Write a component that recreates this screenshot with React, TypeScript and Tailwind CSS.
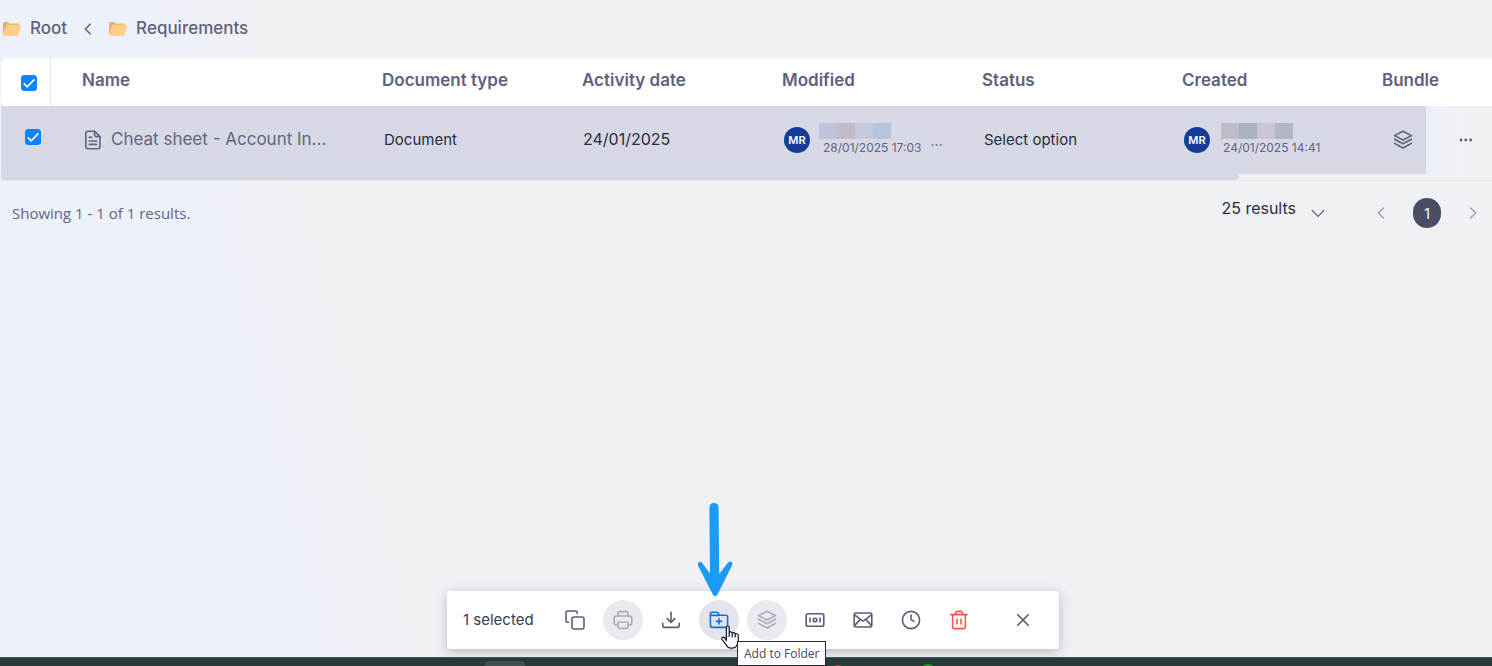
import React from 'react';

type IconProps = { className?: string; children: React.ReactNode };

function Icon({ className = '', children }: IconProps) {
  return (
    <svg
      className={`h-5 w-5 shrink-0 ${className}`}
      viewBox="0 0 20 20"
      fill="none"
      stroke="currentColor"
      strokeWidth="1.6"
      strokeLinecap="round"
      strokeLinejoin="round"
      aria-hidden="true"
    >
      {children}
    </svg>
  );
}

const layersShape = (
  <>
    <path d="M10 1.2 L18.4 5.6 L10 10 L1.6 5.6 Z" />
    <path d="M1.6 9.2 L10 13.8 L18.4 9.2" />
    <path d="M1.6 13.4 L10 18 L18.4 13.4" />
  </>
);

const actions = [
  {
    label: 'Copy',
    tone: 'text-[#5a5c78]',
    icon: (
      <>
        <path d="M3.6 12.2 H2.8 A1.8 1.8 0 0 1 1 10.4 V2.8 A1.8 1.8 0 0 1 2.8 1 H10.4 A1.8 1.8 0 0 1 12.2 2.8 V3.4" />
        <rect x="7" y="7" width="12" height="12" rx="2" />
      </>
    ),
  },
  {
    label: 'Print',
    tone: 'bg-[#e9eaef] text-[#a9abb9]',
    disabled: true,
    icon: (
      <>
        <path d="M5 6 V3.2 A1.6 1.6 0 0 1 6.6 1.6 H13.4 A1.6 1.6 0 0 1 15 3.2 V6" />
        <path d="M5 15 H3.2 A2 2 0 0 1 1.2 13 V8.4 A2.4 2.4 0 0 1 3.6 6 H16.4 A2.4 2.4 0 0 1 18.8 8.4 V13 A2 2 0 0 1 16.8 15 H15" />
        <path d="M5 12.2 H15 V16.6 A1.8 1.8 0 0 1 13.2 18.4 H6.8 A1.8 1.8 0 0 1 5 16.6 Z" />
      </>
    ),
  },
  {
    label: 'Download',
    tone: 'text-[#5a5c78]',
    icon: (
      <>
        <path d="M10 2.4 V12" />
        <path d="M6.2 8.6 L10 12.4 L13.8 8.6" />
        <path d="M1.8 13.2 V15.4 A2 2 0 0 0 3.8 17.4 H16.2 A2 2 0 0 0 18.2 15.4 V13.2" />
      </>
    ),
  },
  {
    label: 'Add to Folder',
    tone: 'bg-[#e3e4ed] text-[#1272d3]',
    icon: (
      <>
        <path d="M1.4 15.6 V4 A1.8 1.8 0 0 1 3.2 2.2 H7.6 A1.4 1.4 0 0 1 8.8 2.8 L10.4 5.2 H16.8 A1.8 1.8 0 0 1 18.6 7 V15.6 A1.8 1.8 0 0 1 16.8 17.4 H3.2 A1.8 1.8 0 0 1 1.4 15.6 Z" />
        <path d="M1.4 5.4 H10.2" />
        <path d="M10 8.8 V14 M7.4 11.4 H12.6" />
      </>
    ),
  },
  { label: 'Add to bundle', tone: 'bg-[#e9eaef] text-[#a9abb9]', disabled: true, icon: layersShape },
  {
    label: 'Number',
    tone: 'text-[#5a5c78]',
    icon: (
      <>
        <rect x="1.2" y="3.8" width="17.6" height="12.4" rx="1.8" />
        <circle cx="10" cy="10" r="1.8" />
        <path d="M5 8 V12 M15 8 V12" />
      </>
    ),
  },
  {
    label: 'Email',
    tone: 'text-[#5a5c78]',
    icon: (
      <>
        <rect x="1.2" y="3" width="17.6" height="14" rx="1.6" />
        <path d="M1.6 4.8 L8.8 10.4 A2 2 0 0 0 11.2 10.4 L18.4 4.8" />
        <path d="M1.8 15.4 L7 9.6 M18.2 15.4 L13 9.6" />
      </>
    ),
  },
  {
    label: 'History',
    tone: 'text-[#5a5c78]',
    icon: (
      <>
        <circle cx="10" cy="10" r="8.6" />
        <path d="M10 5 V9.6 L13 11.4" />
      </>
    ),
  },
  {
    label: 'Delete',
    tone: 'text-[#f9544b]',
    icon: (
      <>
        <path d="M1.8 4.6 H18.2" />
        <path d="M6.2 4.4 L6.8 2.4 A1.4 1.4 0 0 1 8.1 1.4 H11.9 A1.4 1.4 0 0 1 13.2 2.4 L13.8 4.4" />
        <path d="M3.6 4.8 V16.6 A2 2 0 0 0 5.6 18.6 H14.4 A2 2 0 0 0 16.4 16.6 V4.8" />
        <path d="M8 9.4 V14 M12 9.4 V14" />
      </>
    ),
  },
];

function FolderIcon() {
  return (
    <svg className="h-[14px] w-[18px]" viewBox="0 0 18 14" aria-hidden="true">
      <path d="M0 1 Q0 0 1 0 H5 L6.5 1.6 H14.6 Q15.6 1.6 15.6 2.6 V12 H0 Z" fill="#e6b366" />
      <path d="M3.4 3.6 Q3.7 2.8 4.6 2.8 H17 Q18.2 2.8 17.8 4 L15.8 13 Q15.6 14 14.6 14 H1 Q0 14 0 13 V12.4 Z" fill="#ffd086" />
    </svg>
  );
}

function Checkbox({ label }: { label: string }) {
  return (
    <span className="grid h-4 w-4">
      <input
        type="checkbox"
        defaultChecked
        aria-label={label}
        className="col-start-1 row-start-1 h-4 w-4 appearance-none rounded-[3px] border border-gray-400 checked:border-[#0d83fd] checked:bg-[#0d83fd]"
      />
      <svg className="pointer-events-none col-start-1 row-start-1 h-4 w-4" viewBox="0 0 16 16" fill="none" stroke="white" strokeWidth="1.6" aria-hidden="true">
        <path d="M2.8 8.4 L6.2 11.8 L13.4 4.4" />
      </svg>
    </span>
  );
}

function Avatar() {
  return (
    <span className="flex h-[26px] w-[26px] shrink-0 items-center justify-center rounded-full bg-[#143c9b] text-[11px] font-semibold text-white">
      MR
    </span>
  );
}

function RedactedName({ colors }: { colors: string[] }) {
  return (
    <span className="flex h-4">
      {colors.map((c, i) => (
        <span key={i} className={`w-[18px] ${c}`} />
      ))}
    </span>
  );
}

const headings = ['Name', 'Document type', 'Activity date', 'Modified', 'Status', 'Created', 'Bundle'];

function DocumentTable() {
  return (
    <div className="ml-px border-b border-[#e8e6e6]">
      <table className="w-full table-fixed border-separate border-spacing-0 text-left">
        <colgroup>
          <col className="w-[50px]" />
          <col className="w-[300px]" />
          <col className="w-[200px]" />
          <col className="w-[200px]" />
          <col className="w-[200px]" />
          <col className="w-[200px]" />
          <col className="w-[200px]" />
          <col />
          <col className="w-[66px]" />
        </colgroup>
        <thead>
          <tr className="h-12">
            <th className="rounded-l-md border-r border-[#e8e8ec] bg-white pl-5 pt-[2px]">
              <Checkbox label="Select all documents" />
            </th>
            {headings.map((h) => (
              <th key={h} className="overflow-visible whitespace-nowrap bg-white pb-[2px] pl-[31px] text-[17px] font-semibold text-[#5f617d]">
                {h}
              </th>
            ))}
            <th className="bg-white" aria-label="Row actions" />
          </tr>
        </thead>
        <tbody>
          <tr className="h-[68px] text-[#2b2c3d]">
            <td className="bg-[#d6d8e5] pb-[6px] pl-6">
              <Checkbox label="Select Cheat sheet" />
            </td>
            <td className="bg-[#d6d8e5] pl-8 text-[#63657f]">
              <a href="#document" className="flex items-center gap-2">
                <Icon>
                  <path d="M2.8 3.4 A2.2 2.2 0 0 1 5 1.2 H11.6 L17 6.6 V16.6 A2.2 2.2 0 0 1 14.8 18.8 H5 A2.2 2.2 0 0 1 2.8 16.6 Z" />
                  <path d="M11.6 1.4 V5 A1.6 1.6 0 0 0 13.2 6.6 H16.8" />
                  <path d="M6.2 7.4 H8.6 M6.2 11 H13.6 M6.2 14.4 H13.6" />
                </Icon>
                <span className="whitespace-nowrap pb-px text-[17px]">Cheat sheet - Account In...</span>
              </a>
            </td>
            <td className="bg-[#d6d8e5] pl-[33px] text-[15px]">Document</td>
            <td className="bg-[#d6d8e5] pb-[2px] pl-8 text-[16px]">24/01/2025</td>
            <td className="bg-[#d6d8e5] pl-[33px]">
              <div className="flex items-center gap-[9px]">
                <Avatar />
                <div className="flex flex-col">
                  <RedactedName colors={['bg-[#bcc3da]', 'bg-[#c2bbc6]', 'bg-[#c4cad9]', 'bg-[#b6c4de]']} />
                  <span className="whitespace-nowrap pl-1 text-[12px] leading-[18px] text-[#63657f]">28/01/2025 17:03</span>
                </div>
                <span className="text-[14px] text-[#5f617d]">...</span>
              </div>
            </td>
            <td className="bg-[#d6d8e5] pl-[33px] text-[15px]">
              <button type="button">Select option</button>
            </td>
            <td className="bg-[#d6d8e5] pl-[33px]">
              <div className="flex items-center gap-[11px]">
                <Avatar />
                <div className="flex flex-col">
                  <RedactedName colors={['bg-[#bfbcc5]', 'bg-[#abb2bf]', 'bg-[#cac7d2]', 'bg-[#b0b7c9]']} />
                  <span className="whitespace-nowrap pl-[2px] text-[12px] leading-[18px] text-[#63657f]">24/01/2025 14:41</span>
                </div>
              </div>
            </td>
            <td className="bg-[#d6d8e5] pl-[42px] text-[#5f617d]">
              <button type="button" aria-label="Bundle" className="block">
                <Icon>{layersShape}</Icon>
              </button>
            </td>
            <td className="bg-linear-to-r from-[#ebf0fb] to-[#f1f1f5] to-60% pl-[30px] text-[#55576f]">
              <button type="button" aria-label="More options" className="block">
                <svg className="h-5 w-5" viewBox="0 0 20 20" fill="currentColor" aria-hidden="true">
                  <circle cx="5" cy="10" r="1.4" />
                  <circle cx="9.8" cy="10" r="1.4" />
                  <circle cx="14.6" cy="10" r="1.4" />
                </svg>
              </button>
            </td>
          </tr>
        </tbody>
      </table>
      {/* horizontal scroll thumb */}
      <div className="h-[6px] w-[83%] rounded-full bg-[#d5d9e5]" />
    </div>
  );
}

function Pagination() {
  return (
    <div className="flex h-16 items-center justify-between pl-3 pr-[11px]">
      <p className="font-['Open_Sans',sans-serif] text-[15px] text-[#63657f]">Showing 1 - 1 of 1 results.</p>
      <div className="flex items-center">
        <button type="button" className="mr-[47px] flex items-center gap-[14px] text-[16px] text-[#2b2c3d]">
          <span className="pb-[10px]">25 results</span>
          <svg className="h-4 w-4" viewBox="0 0 16 16" fill="none" stroke="#5a5c70" strokeWidth="1.1" aria-hidden="true">
            <path d="M1.8 5 L8 11.4 L14.2 5" />
          </svg>
        </button>
        <button type="button" aria-label="Previous page" className="mr-6 text-[#a4a6b8]">
          <svg className="h-4 w-4" viewBox="0 0 16 16" fill="none" stroke="currentColor" strokeWidth="1.5" aria-hidden="true">
            <path d="M10.8 2.6 L5.4 8 L10.8 13.4" />
          </svg>
        </button>
        <button type="button" aria-current="page" className="mr-6 h-[30px] w-7 rounded-full bg-[#4b4d66] text-[14px] text-white">
          1
        </button>
        <button type="button" aria-label="Next page" className="text-[#a4a6b8]">
          <svg className="h-4 w-4" viewBox="0 0 16 16" fill="none" stroke="currentColor" strokeWidth="1.5" aria-hidden="true">
            <path d="M5.2 2.6 L10.6 8 L5.2 13.4" />
          </svg>
        </button>
      </div>
    </div>
  );
}

function FolderHint() {
  return (
    <>
      {/* arrow above the button */}
      <svg className="pointer-events-none absolute -top-[97px] -left-[2px] h-[94px] w-9" viewBox="0 0 36 94" fill="#1b9bf6" aria-hidden="true">
        <path d="M12.4 5 Q12.4 0 17 0 Q21.6 0 21.6 5 L22.2 71 L30.6 60 Q32.4 57.6 34.4 58.8 Q36 60 35 62.6 L21 90.6 Q18.2 96 15.4 90.8 L1.4 63.2 Q0.2 60.6 1.8 59.2 Q3.8 58.2 5.4 60.2 L13 70.6 Z" />
      </svg>
      <svg className="pointer-events-none absolute top-[25px] left-[22px] z-10 h-6 w-[18px]" viewBox="0 0 18 24" fill="white" stroke="#16162a" strokeWidth="1.2" strokeLinejoin="round" aria-hidden="true">
        <path d="M5.4 15.6 V2.4 Q5.4 1 6.8 1 Q8.2 1 8.2 2.4 V8.2 Q8.4 6.7 9.8 6.9 Q11.2 7 11.2 8.6 Q11.6 7.3 12.9 7.6 Q14.2 7.8 14.2 9.4 Q14.8 8.3 16 8.7 Q17.3 9.1 17.3 10.8 V15.6 Q17.3 17.6 16.3 19.6 Q14.6 23.2 11 23.2 H10 Q7.2 23.2 5.4 20.2 L1.2 14.6 Q0.4 13.2 1.4 12.4 Q2.6 11.6 3.8 13 Z" />
        <path d="M8.2 8.2 V12 M11.2 8.8 V12.2 M14.2 9.8 V12.6" fill="none" />
      </svg>
      <span role="tooltip" className="absolute top-[41px] left-[38px] z-20 flex h-[25px] items-center whitespace-nowrap border border-[#26262e] bg-white px-[6px] font-['Open_Sans',sans-serif] text-[12px] text-[#45475c]">
        Add to Folder
      </span>
    </>
  );
}

function SelectionBar() {
  return (
    <div className="relative z-10 mb-2 flex justify-center pl-[14px]">
      <div className="flex h-[58px] w-[612px] items-center rounded-[3px] bg-white px-4 shadow-[0_3px_12px_rgba(60,60,80,0.3)]">
        <span className="w-[92px] whitespace-nowrap text-[15px] text-[#3a3b50]">1 selected</span>
        <div className="flex gap-2">
          {actions.map((a) => (
            <div key={a.label} className="relative">
              <button type="button" aria-label={a.label} disabled={a.disabled} className={`flex h-10 w-10 items-center justify-center rounded-full ${a.tone}`}>
                <Icon>{a.icon}</Icon>
              </button>
              {a.label === 'Add to Folder' && <FolderHint />}
            </div>
          ))}
        </div>
        <button type="button" aria-label="Clear selection" className="ml-auto flex h-10 w-10 items-center justify-center text-[#55576f]">
          <Icon>
            <path d="M4.8 4.8 L15.2 15.2 M15.2 4.8 L4.8 15.2" />
          </Icon>
        </button>
      </div>
    </div>
  );
}

export default function App() {
  return (
    <div className="flex min-h-screen flex-col overflow-hidden bg-[linear-gradient(76deg,#ecf1fa_0%,#edf1fa_17%,#f0f1f5_25%)] font-[Inter,sans-serif]">
      <nav aria-label="Breadcrumb" className="flex h-[58px] items-center pl-[3px] text-[17px] font-medium text-[#5f617d]">
        <a href="#root" className="flex items-center gap-[9px]">
          <FolderIcon />
          Root
        </a>
        <svg className="mx-[13px] h-4 w-4" viewBox="0 0 16 16" fill="none" stroke="currentColor" strokeWidth="1.5" aria-hidden="true">
          <path d="M10.6 2.8 L5.4 8 L10.6 13.2" />
        </svg>
        <a href="#requirements" className="flex items-center gap-[9px]">
          <FolderIcon />
          Requirements
        </a>
      </nav>
      <main className="flex-1">
        <DocumentTable />
        <Pagination />
      </main>
      <SelectionBar />
      {/* desktop taskbar */}
      <footer className="flex h-[9px] overflow-hidden border-t border-[#48585a] bg-[#283b39] pl-[485px]">
        <span className="mt-[3px] h-4 w-10 rounded bg-[#40504e]" />
        <span className="mt-[7px] ml-[307px] h-4 w-3 rounded-full bg-[#c74a45]" />
        <span className="mt-[6px] ml-[76px] h-4 w-4 rounded-full bg-[#18a018]" />
      </footer>
    </div>
  );
}
